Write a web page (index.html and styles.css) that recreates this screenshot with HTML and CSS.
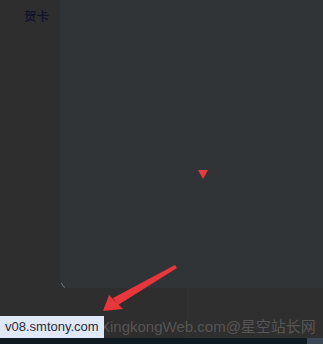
FILE: index.html
```html
<!DOCTYPE html>
<html lang="zh">
<head>
<meta charset="utf-8">
<link rel="stylesheet" href="styles.css">
</head>
<body>
<div class="screen">
  <div class="top">
    <div class="side"><span class="label">贺卡</span></div>
    <div class="panel"><span class="caret"></span></div>
  </div>
  <div class="lower">
    <div class="lower-left"></div>
    <div class="lower-right"></div>
  </div>
  <div class="strip"><div class="strip-fill"></div><div class="strip-block"></div></div>
  <div class="status">v08.smtony.com</div>
  <div class="watermark">XingkongWeb.com@星空站长网</div>
  <svg class="arrow" width="323" height="344" viewBox="0 0 323 344">
    <polygon points="175,265 177,268 118,305 113,298" fill="#e8363a"/>
    <polygon points="103,311 109,295 123,309" fill="#e8363a"/>
    <path d="M61.5 283 Q62 286 65 287.5" stroke="#7a7d80" stroke-width="1" fill="none"/>
  </svg>
</div>
</body>
</html>
```
FILE: styles.css
```css
html, body {
  margin: 0;
  padding: 0;
}
body {
  background: #2f2e2e;
  font-family: "Liberation Sans", Arial, "Noto Sans CJK SC", sans-serif;
}
.screen {
  position: relative;
  width: 323px;
  height: 344px;
  overflow: hidden;
  display: flex;
  flex-direction: column;
}
.top {
  display: flex;
  height: 288px;
}
.side {
  width: 60px;
  flex: none;
  padding: 7px 0 0 24px;
  box-sizing: border-box;
}
.label {
  font-family: "Noto Sans CJK SC", sans-serif;
  font-size: 12.5px;
  font-weight: 500;
  line-height: 16px;
  color: #10122a;
}
.panel {
  flex: 1;
  background: #313437;
  border-bottom-left-radius: 6px;
  display: flex;
  padding: 170px 0 0 138px;
  box-sizing: border-box;
}
.caret {
  width: 0;
  height: 0;
  border-left: 5px solid transparent;
  border-right: 5px solid transparent;
  border-top: 9px solid #e8393b;
}
.lower {
  display: flex;
  height: 50px;
}
.lower-left {
  width: 187px;
  border-right: 1px solid #323232;
}
.lower-right {
  flex: 1;
  background: #302f2f;
}
.strip {
  display: flex;
  height: 6px;
}
.strip-fill {
  flex: 1;
  background: #0f1b21;
}
.strip-block {
  width: 16px;
  background: #3b4652;
}
.status {
  position: absolute;
  left: 0;
  top: 316px;
  width: 104px;
  height: 22px;
  background: #dfe8f7;
  color: #2a2b3a;
  font-size: 13px;
  line-height: 22px;
  padding-left: 5px;
  box-sizing: border-box;
  white-space: nowrap;
  z-index: 1;
}
.watermark {
  position: absolute;
  left: 100px;
  top: 316px;
  font-family: "Liberation Sans", "Noto Sans CJK SC", sans-serif;
  font-size: 15px;
  line-height: 22px;
  color: rgba(120,120,120,0.55);
  white-space: nowrap;
  z-index: 0;
}
.arrow {
  position: absolute;
  left: 0;
  top: 0;
  z-index: 2;
}
```
